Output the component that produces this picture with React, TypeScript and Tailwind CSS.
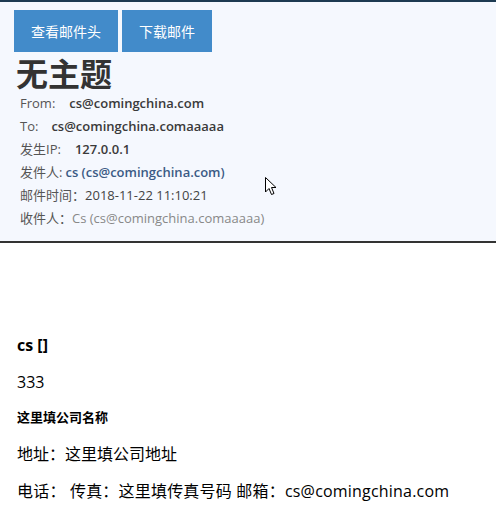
const sans = 'font-["Open_Sans","Noto_Sans_CJK_SC",sans-serif]';

function MetaRow({ label, value, valueClass }: { label: string; value: string; valueClass: string }) {
    return (
        <div className="flex h-[23px] items-center text-[13px]">
            <span className="text-[#555]">{label}</span>
            <span className={valueClass}>{value}</span>
        </div>
    );
}

export default function App() {
    return (
        <div className={`relative min-h-[518px] w-[496px] bg-white ${sans}`}>
            <div className="h-[2px] bg-[#1d3a52]" />
            <div className="border-b-2 border-[#333] bg-[#f5f8fe] px-[14px] pb-[11px] pt-[8px]">
                <div className="flex gap-1">
                    <button type="button" className="h-[42px] w-[104px] bg-[#428bca] text-[14px] text-white">
                        查看邮件头
                    </button>
                    <button type="button" className="h-[42px] w-[90px] bg-[#428bca] text-[14px] text-white">
                        下载邮件
                    </button>
                </div>
                <h1 className="ml-[2px] mt-[4px] text-[32px] font-bold leading-[35px] text-[#333]">无主题</h1>
                <div className="ml-[6px] mt-[1px]">
                    <MetaRow label="From:" value="cs@comingchina.com" valueClass="ml-[14px] font-semibold text-[#3a3a3a]" />
                    <MetaRow label="To:" value="cs@comingchina.comaaaaa" valueClass="ml-[13px] font-semibold text-[#3a3a3a]" />
                    <MetaRow label="发生IP:" value="127.0.0.1" valueClass="ml-[14px] font-semibold text-[#3a3a3a]" />
                    <MetaRow label="发件人:" value="cs (cs@comingchina.com)" valueClass="ml-[3px] font-semibold text-[#3b5b85]" />
                    <MetaRow label="邮件时间：" value="2018-11-22 11:10:21" valueClass="text-[#444]" />
                    <MetaRow label="收件人：" value="Cs (cs@comingchina.comaaaaa)" valueClass="text-[#888]" />
                </div>
            </div>
            <div className="flex flex-col px-[17px] pt-[92px] text-black">
                <p className="text-[16px] font-bold leading-[20px]">cs []</p>
                <p className="mt-[16px] text-[16px] leading-[22px]">333</p>
                <p className="mt-[15px] text-[13px] font-bold leading-[18px]">这里填公司名称</p>
                <p className="mt-[17px] text-[16px] leading-[22px]">地址：这里填公司地址</p>
                <p className="mt-[15px] text-[16px] leading-[22px] tracking-[0.2px]">电话： 传真：这里填传真号码 邮箱：cs@comingchina.com</p>
            </div>
            <svg className="absolute left-[265px] top-[177px]" width="12" height="19" viewBox="0 0 12 19">
                <path d="M0.5 0.5 L0.5 15 L4 11.5 L6.5 17.5 L9 16.5 L6.5 10.5 L11 10.5 Z" fill="#fff" stroke="#000" strokeWidth="1" />
            </svg>
        </div>
    );
}
